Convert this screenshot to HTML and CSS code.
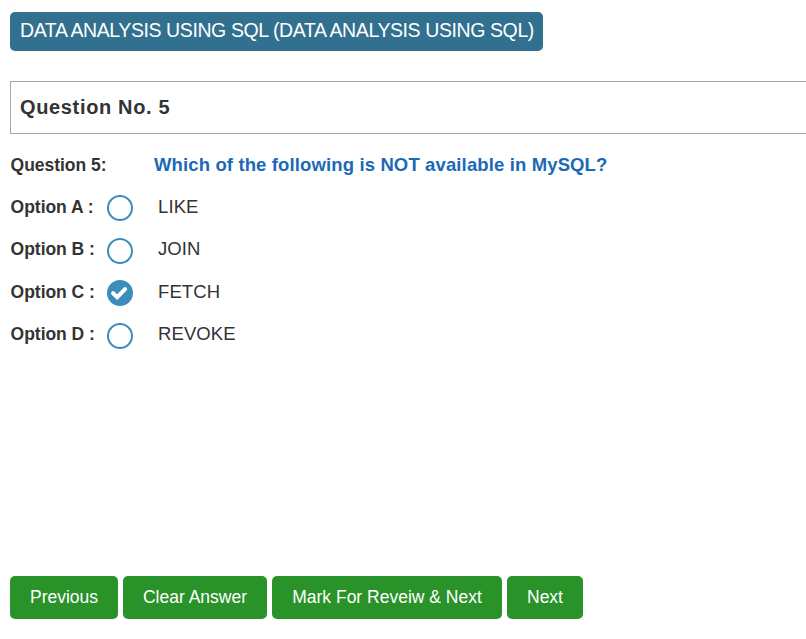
FILE: index.html
```html
<!DOCTYPE html>
<html lang="en">
<head>
<meta charset="utf-8">
<title>Data Analysis Using SQL</title>
<link rel="stylesheet" href="styles.css">
</head>
<body>
<main class="page">
  <h1 class="subject">DATA ANALYSIS USING SQL (DATA ANALYSIS USING SQL)</h1>
  <h2 class="heading">Question No. 5</h2>
  <div class="question"><span class="label">Question 5:</span><span class="prompt">Which of the following is NOT available in MySQL?</span></div>
  <div class="options">
    <div class="option"><span class="label">Option A :</span><i class="radio"></i><span class="answer">LIKE</span></div>
    <div class="option"><span class="label">Option B :</span><i class="radio"></i><span class="answer">JOIN</span></div>
    <div class="option"><span class="label">Option C :</span><i class="radio checked"><svg viewBox="0 0 26 26"><path d="M6.1 13.2l4.1 4 7.9-8.1"/></svg></i><span class="answer">FETCH</span></div>
    <div class="option"><span class="label">Option D :</span><i class="radio"></i><span class="answer">REVOKE</span></div>
  </div>
  <div class="actions">
    <button class="prev">Previous</button><button class="clear">Clear Answer</button><button class="mark">Mark For Reveiw &amp; Next</button><button class="next">Next</button>
  </div>
</main>
</body>
</html>
```
FILE: styles.css
```css
* { box-sizing: border-box; }
body { margin: 0; background: #fff; color: #333; font-family: "Liberation Sans", Arial, sans-serif; overflow: hidden; }
.page { height: 639px; padding: 12px 0 20px 10px; display: flex; flex-direction: column; }
.subject { width: 533px; height: 39px; margin: 0 0 30px; padding-left: 10px; border-radius: 5px; background: #31708f; color: #fff; font-size: 19.5px; font-weight: 400; line-height: 37px; letter-spacing: -.4px; white-space: nowrap; }
.heading { height: 53px; margin: 0; padding-left: 9px; border: 1px solid #a9a6a6; border-right: 0; font-size: 20px; line-height: 50px; letter-spacing: .65px; }
.question { display: flex; height: 53px; padding-top: 18px; line-height: 26px; font-weight: 700; }
.label { width: 97px; padding-left: .6px; flex: none; font-size: 17.5px; font-weight: 700; letter-spacing: -.03px; white-space: nowrap; }
.question .label { width: 144px; }
.prompt { color: #1b69b6; font-size: 18.5px; letter-spacing: .13px; white-space: nowrap; }
.options { display: flex; flex-direction: column; }
.option { display: flex; height: 42.5px; line-height: 39px; }
.option:nth-child(odd) .label { line-height: 40px; }
.option:nth-child(even) { line-height: 38px; }
.radio { width: 26px; height: 26px; margin: 8px 25px 0 0; border: 2px solid #3c8dbc; border-radius: 50%; flex: none; }
.checked { border: 0; background: #3c8dbc; }
.radio svg { display: block; width: 26px; height: 26px; fill: none; stroke: #fff; stroke-width: 4; stroke-linecap: round; }
.answer { font-size: 18.5px; letter-spacing: .1px; }
.actions { display: flex; gap: 5px; margin-top: auto; }
button { height: 43px; padding: 0; border: 0; border-radius: 5px; background: #299229; color: #fff; font: 17.5px "Liberation Sans", Arial, sans-serif; white-space: nowrap; }
.prev { width: 108px; }
.clear { width: 144px; }
.mark { width: 230px; }
.next { width: 76px; }
```
